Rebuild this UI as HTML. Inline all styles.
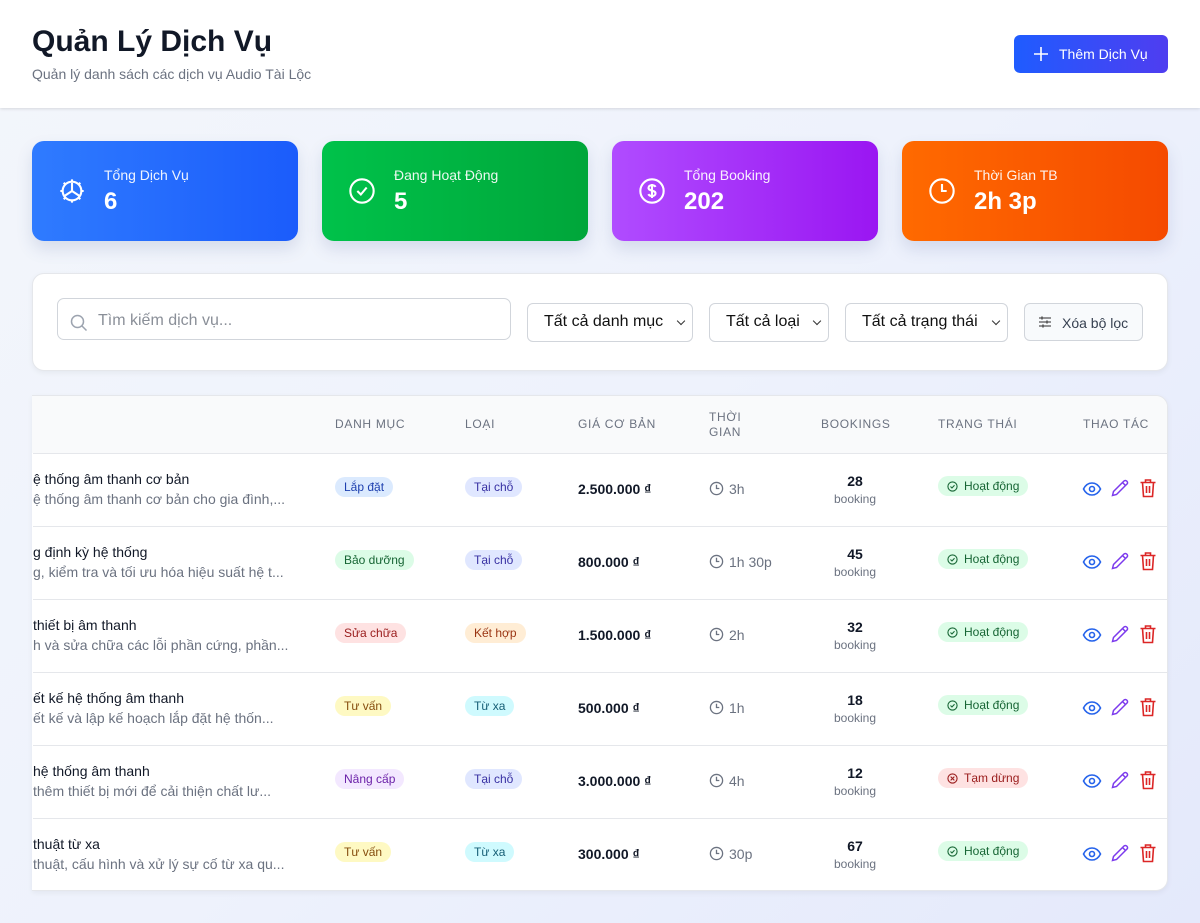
<!DOCTYPE html>
<html><head><meta charset="utf-8"><style>
*{box-sizing:border-box;margin:0;padding:0}
body{width:1200px;height:923px;overflow:hidden;font-family:"Liberation Sans",sans-serif;background:linear-gradient(135deg,#f3f6fb 0%,#eef2fc 50%,#e4e9fb 100%);position:relative;color:#111827}
.a{position:absolute}
.hdr{left:0;top:0;width:1200px;height:108px;background:#fff;box-shadow:0 1px 3px rgba(0,0,0,.12)}
.card{height:100px;top:141px;width:266px;border-radius:12px;box-shadow:0 8px 16px rgba(60,80,140,.15);color:#fff}
.card .l{position:absolute;left:72px;top:26px;font-size:14px;opacity:.92}
.card .v{position:absolute;left:72px;top:47px;font-size:24px;font-weight:bold}
.card svg{position:absolute;left:26px;top:36px}
.box{background:#fff;border:1px solid #e5e7eb;border-radius:12px;box-shadow:0 2px 6px rgba(0,0,0,.05)}
.sel{top:303px;height:39px;border:1px solid #d1d5db;border-radius:6px;background:#fff;font-size:16px;padding:9px 0 0 16px;color:#111}
.sel:after{content:"";position:absolute;right:8px;top:14px;width:5px;height:5px;border-right:1.5px solid #333;border-bottom:1.5px solid #333;transform:rotate(45deg)}
.th{top:417px;font-size:12px;letter-spacing:.7px;color:#6b7280}
.row{left:33px;width:1134px;height:73px;border-top:1px solid #e5e7eb}
.n{left:0;font-size:14px;color:#111827;white-space:nowrap}
.d{left:0;font-size:14px;color:#6b7280;white-space:nowrap}
.b{font-size:12px;padding:3px 9px;border-radius:10px;white-space:nowrap}
.p{font-size:14px;font-weight:bold;color:#111827}
.t{font-size:14px;color:#6b7280}
.bk{width:80px;text-align:center}
</style></head><body>
<div class="a hdr"></div>
<div class="a" style="left:32px;top:25px;font-size:30px;font-weight:bold;color:#111827">Quản Lý Dịch Vụ</div>
<div class="a" style="left:32px;top:66px;font-size:14px;color:#6b7280">Quản lý danh sách các dịch vụ Audio Tài Lộc</div>
<div class="a" style="left:1014px;top:35px;width:154px;height:38px;border-radius:6px;background:linear-gradient(90deg,#1f5cff,#4f3df0);color:#fff;font-size:14px;padding:11px 0 0 45px">Thêm Dịch Vụ</div>
<svg class="a" style="left:1032px;top:45px" width="18" height="18" viewBox="0 0 18 18"><path d="M9 2v14M2 9h14" stroke="#fff" stroke-width="1.6"/></svg>

<div class="a card" style="left:32px;background:linear-gradient(90deg,#2f7bff,#1b5cfb)"><svg width="28" height="28" viewBox="0 0 24 24" fill="none" stroke="#fff" stroke-width="1.8"><circle cx="12" cy="12" r="8"/><path d="M12 4v-2M12 22v-2M4 12H2M22 12h-2M6.3 6.3 4.9 4.9M19.1 19.1l-1.4-1.4M6.3 17.7l-1.4 1.4M19.1 4.9l-1.4 1.4M12 12V5M12 12l6 4M12 12l-6 4"/></svg><div class="l">Tổng Dịch Vụ</div><div class="v">6</div></div>
<div class="a card" style="left:322px;background:linear-gradient(90deg,#00c24a,#00a63a)"><svg width="28" height="28" viewBox="0 0 24 24" fill="none" stroke="#fff" stroke-width="1.8"><circle cx="12" cy="12" r="10"/><path d="M8 12l3 3 5-6"/></svg><div class="l">Đang Hoạt Động</div><div class="v">5</div></div>
<div class="a card" style="left:612px;background:linear-gradient(90deg,#b04cff,#9a16f2)"><svg width="28" height="28" viewBox="0 0 24 24" fill="none" stroke="#fff" stroke-width="1.8"><circle cx="12" cy="12" r="10"/><path d="M12 6v12M15 8.5c-.5-1-1.6-1.5-3-1.5-1.7 0-3 .9-3 2.3 0 3 6 1.7 6 4.7 0 1.4-1.3 2.3-3 2.3-1.5 0-2.6-.6-3.1-1.6"/></svg><div class="l">Tổng Booking</div><div class="v">202</div></div>
<div class="a card" style="left:902px;background:linear-gradient(90deg,#ff6a00,#f54a00)"><svg width="28" height="28" viewBox="0 0 24 24" fill="none" stroke="#fff" stroke-width="1.8"><circle cx="12" cy="12" r="10"/><path d="M12 6v6h4"/></svg><div class="l">Thời Gian TB</div><div class="v">2h 3p</div></div>

<div class="a box" style="left:32px;top:273px;width:1136px;height:98px"></div>
<div class="a" style="left:57px;top:298px;width:454px;height:42px;border:1px solid #d1d5db;border-radius:7px;background:#fff;font-size:16px;color:#8a8f98;padding:13px 0 0 40px">Tìm kiếm dịch vụ...</div>
<svg class="a" style="left:69px;top:313px" width="20" height="20" viewBox="0 0 20 20" fill="none" stroke="#9ca3af" stroke-width="1.5"><circle cx="8.5" cy="8.5" r="6"/><path d="M13 13l4.5 4.5"/></svg>
<div class="a sel" style="left:527px;width:166px">Tất cả danh mục</div>
<div class="a sel" style="left:709px;width:120px">Tất cả loại</div>
<div class="a sel" style="left:845px;width:163px">Tất cả trạng thái</div>
<div class="a" style="left:1024px;top:303px;width:119px;height:38px;border:1px solid #d1d5db;border-radius:6px;background:#f8fafc;font-size:14px;color:#374151;padding:11px 0 0 37px">Xóa bộ lọc</div>
<svg class="a" style="left:1038px;top:315px" width="14" height="14" viewBox="0 0 14 14" stroke="#555" stroke-width="1.3"><path d="M1 3h12M1 7h12M1 11h12"/><path d="M4 1.5v3M9 5.5v3M5 9.5v3" stroke-width="1.6"/></svg>

<div class="a box" style="left:32px;top:395px;width:1136px;height:496px;overflow:hidden;border-left:none;border-top-left-radius:0;border-bottom-left-radius:0">
<div class="a" style="left:0;top:0;width:1136px;height:57px;background:#f9fafb"></div>
</div>
<div class="a th" style="left:335px">DANH MỤC</div>
<div class="a th" style="left:465px">LOẠI</div>
<div class="a th" style="left:578px">GIÁ CƠ BẢN</div>
<div class="a th" style="left:709px;top:410px;line-height:15px">THỜI<br>GIAN</div>
<div class="a th" style="left:821px">BOOKINGS</div>
<div class="a th" style="left:938px">TRẠNG THÁI</div>
<div class="a th" style="left:1083px">THAO TÁC</div>

<div id="rows"></div>
<script>
var R=[
["ệ thống âm thanh cơ bản","ệ thống âm thanh cơ bản cho gia đình,...","Lắp đặt","#dbeafe","#1e40af","Tại chỗ","#e0e7ff","#3730a3","2.500.000 ₫","3h","28",1],
["g định kỳ hệ thống","g, kiểm tra và tối ưu hóa hiệu suất hệ t...","Bảo dưỡng","#dcfce7","#166534","Tại chỗ","#e0e7ff","#3730a3","800.000 ₫","1h 30p","45",1],
[" thiết bị âm thanh","h và sửa chữa các lỗi phần cứng, phần...","Sửa chữa","#fee2e2","#991b1b","Kết hợp","#ffedd5","#9a3412","1.500.000 ₫","2h","32",1],
["ết kế hệ thống âm thanh","ết kế và lập kế hoạch lắp đặt hệ thốn...","Tư vấn","#fef9c3","#854d0e","Từ xa","#cffafe","#155e75","500.000 ₫","1h","18",1],
[" hệ thống âm thanh"," thêm thiết bị mới để cải thiện chất lư...","Nâng cấp","#f3e8ff","#6b21a8","Tại chỗ","#e0e7ff","#3730a3","3.000.000 ₫","4h","12",0],
[" thuật từ xa","thuật, cấu hình và xử lý sự cố từ xa qu...","Tư vấn","#fef9c3","#854d0e","Từ xa","#cffafe","#155e75","300.000 ₫","30p","67",1]];
var h="";
R.forEach(function(r,i){var y=453+i*73;
h+='<div class="a row" style="top:'+y+'px"></div>';
h+='<div class="a n" style="left:33px;top:'+(y+18)+'px;width:280px;overflow:hidden">'+r[0]+'</div>';
h+='<div class="a d" style="left:33px;top:'+(y+38)+'px;width:280px;overflow:hidden">'+r[1]+'</div>';
h+='<div class="a b" style="left:335px;top:'+(y+24)+'px;background:'+r[3]+';color:'+r[4]+'">'+r[2]+'</div>';
h+='<div class="a b" style="left:465px;top:'+(y+24)+'px;background:'+r[6]+';color:'+r[7]+'">'+r[5]+'</div>';
h+='<div class="a p" style="left:578px;top:'+(y+28)+'px">'+r[8]+'</div>';
h+='<svg class="a" style="left:709px;top:'+(y+28)+'px" width="15" height="15" viewBox="0 0 16 16" fill="none" stroke="#6b7280" stroke-width="1.4"><circle cx="8" cy="8" r="6.5"/><path d="M8 4v4h3"/></svg>';
h+='<div class="a t" style="left:729px;top:'+(y+28)+'px">'+r[9]+'</div>';
h+='<div class="a bk" style="left:815px;top:'+(y+20)+'px;font-size:14px;font-weight:bold">'+r[10]+'</div>';
h+='<div class="a bk" style="left:815px;top:'+(y+39)+'px;font-size:12px;color:#6b7280">booking</div>';
var ok=r[11];
h+='<div class="a b" style="left:938px;top:'+(y+23)+'px;padding-left:26px;background:'+(ok?'#dcfce7':'#fee2e2')+';color:'+(ok?'#166534':'#991b1b')+'">'+(ok?'Hoạt động':'Tạm dừng')+'</div>';
h+='<svg class="a" style="left:947px;top:'+(y+28)+'px" width="11" height="11" viewBox="0 0 12 12" fill="none" stroke="'+(ok?'#166534':'#991b1b')+'" stroke-width="1.2"><circle cx="6" cy="6" r="5"/>'+(ok?'<path d="M3.8 6l1.6 1.6 2.8-3"/>':'<path d="M4 4l4 4M8 4l-4 4"/>')+'</svg>';
h+='<svg class="a" style="left:1082px;top:'+(y+27)+'px" width="20" height="18" viewBox="0 0 20 18" fill="none" stroke="#2563eb" stroke-width="1.6"><path d="M1.5 9C3.5 5 6.5 3 10 3s6.5 2 8.5 6c-2 4-5 6-8.5 6S3.5 13 1.5 9z"/><circle cx="10" cy="9" r="2.5"/></svg>';
h+='<svg class="a" style="left:1110px;top:'+(y+25)+'px" width="20" height="20" viewBox="0 0 20 20" fill="none" stroke="#7c3aed" stroke-width="1.5"><path d="M2.5 17.5l1-4L14 3a1.8 1.8 0 0 1 2.6 0l.4.4a1.8 1.8 0 0 1 0 2.6L6.5 16.5z M12.5 4.5l3 3"/></svg>';
h+='<svg class="a" style="left:1139px;top:'+(y+25)+'px" width="18" height="20" viewBox="0 0 18 20" fill="none" stroke="#dc2626" stroke-width="1.6"><path d="M1.5 4.5h15M6.5 4.5V2h5v2.5M3.5 4.5l1 14h9l1-14M7.5 8v7M10.5 8v7"/></svg>';
});
document.getElementById("rows").innerHTML=h;
</script>
</body></html>
